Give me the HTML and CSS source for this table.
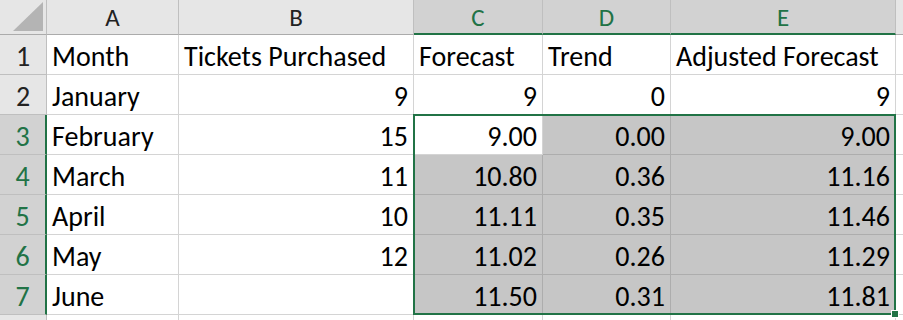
FILE: index.html
```html
<!DOCTYPE html>
<html lang="en">
<head>
    <meta charset="UTF-8">
    <title>Forecast sheet</title>
    <link rel="stylesheet" href="styles.css">
</head>
<body>
    <div class="sheet">
        <!-- column headers -->
        <div class="hd corner">
            <svg width="46" height="34" viewBox="0 0 46 34"><polygon points="13,31 43,31 43,2" fill="#b4b4b4"/></svg>
        </div>
        <div class="hd">A</div>
        <div class="hd">B</div>
        <div class="hd sel">C</div>
        <div class="hd sel">D</div>
        <div class="hd sel">E</div>
        <div class="hd"></div>

        <div class="rh">1</div>
        <div class="c">Month</div>
        <div class="c">Tickets Purchased</div>
        <div class="c">Forecast</div>
        <div class="c">Trend</div>
        <div class="c">Adjusted Forecast</div>
        <div class="c"></div>

        <div class="rh">2</div>
        <div class="c">January</div>
        <div class="c num">9</div>
        <div class="c num">9</div>
        <div class="c num">0</div>
        <div class="c num">9</div>
        <div class="c"></div>

        <div class="rh sel">3</div>
        <div class="c">February</div>
        <div class="c num">15</div>
        <div class="c num">9.00</div>
        <div class="c num s">0.00</div>
        <div class="c num s">9.00</div>
        <div class="c"></div>

        <div class="rh sel">4</div>
        <div class="c">March</div>
        <div class="c num">11</div>
        <div class="c num s">10.80</div>
        <div class="c num s">0.36</div>
        <div class="c num s">11.16</div>
        <div class="c"></div>

        <div class="rh sel">5</div>
        <div class="c">April</div>
        <div class="c num">10</div>
        <div class="c num s">11.11</div>
        <div class="c num s">0.35</div>
        <div class="c num s">11.46</div>
        <div class="c"></div>

        <div class="rh sel">6</div>
        <div class="c">May</div>
        <div class="c num">12</div>
        <div class="c num s">11.02</div>
        <div class="c num s">0.26</div>
        <div class="c num s">11.29</div>
        <div class="c"></div>

        <div class="rh sel">7</div>
        <div class="c">June</div>
        <div class="c num"></div>
        <div class="c num s">11.50</div>
        <div class="c num s">0.31</div>
        <div class="c num s">11.81</div>
        <div class="c"></div>

        <div class="rh"></div>
        <div class="c"></div>
        <div class="c"></div>
        <div class="c"></div>
        <div class="c"></div>
        <div class="c"></div>
        <div class="c"></div>

        <!-- selected range C3:E7, drawn over the cells -->
        <div class="sel-box"><span class="handle"></span></div>
    </div>
</body>
</html>
```

FILE: styles.css
```css
/* Spreadsheet grid */
body { margin: 0; background: #ffffff; font-family: Carlito, Lato, sans-serif; overflow: hidden; }
.sheet { position: relative; display: grid; grid-template-columns: 47px 132px 235px 129px 128px 225px 40px; grid-template-rows: 35px repeat(7, 40px) 20px; width: 903px; height: 320px; overflow: hidden; }
.sheet > div { box-sizing: border-box; }

.hd { background: #e6e6e6; border-right: 1px solid #bfbfbf; border-bottom: 1px solid #ababab; color: #222; font-size: 25px; display: flex; justify-content: center; align-items: flex-end; padding-bottom: 1px; line-height: 1.2; }
.hd.sel { background: #d2d2d2; color: #217346; border-bottom: 2px solid #217346; padding-bottom: 0; }
.corner { padding: 0; align-items: stretch; justify-content: flex-start; }
.corner svg { display: block; }

.rh { background: #e6e6e6; border-right: 1px solid #bfbfbf; border-bottom: 1px solid #bfbfbf; color: #222; font-size: 28px; line-height: 1.2; display: flex; justify-content: center; align-items: flex-end; padding-bottom: 0; }
.rh.sel { background: #d2d2d2; color: #217346; border-right: 2px solid #217346; }

.c { border-right: 1px solid #d4d4d4; border-bottom: 1px solid #d4d4d4; font-size: 28px; line-height: 1.2; color: #000; display: flex; align-items: flex-end; padding: 0 5px 0 5px; white-space: nowrap; }
.num { justify-content: flex-end; }
.c.s { background: #c6c6c6; border-color: #adadad; }

.sel-box { position: absolute; left: 413px; top: 114px; width: 483px; height: 201px; box-sizing: border-box; border: 2px solid #217346; }
.handle { position: absolute; right: -5px; bottom: -5px; width: 6px; height: 6px; background: #217346; border: 1px solid #ffffff; }
```
